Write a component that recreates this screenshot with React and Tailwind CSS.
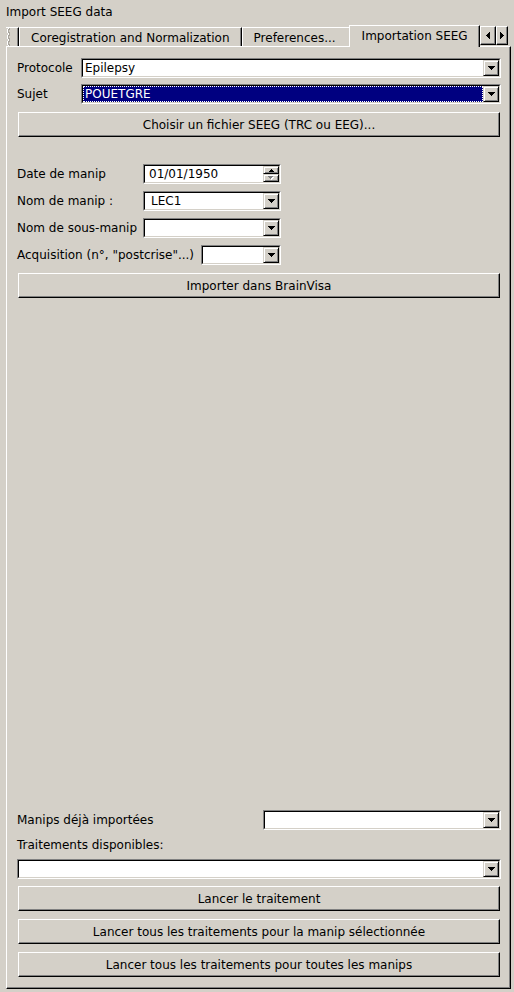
import React from "react";

const FONT = "font-['DejaVu_Sans','Liberation_Sans',sans-serif]";

function DownTri({ color = "#000000" }) {
  return (
    <svg width="7" height="4" viewBox="0 0 7 4" shapeRendering="crispEdges">
      <rect x="0" y="0" width="7" height="1" fill={color} />
      <rect x="1" y="1" width="5" height="1" fill={color} />
      <rect x="2" y="2" width="3" height="1" fill={color} />
      <rect x="3" y="3" width="1" height="1" fill={color} />
    </svg>
  );
}

function SmallUp() {
  return (
    <svg width="5" height="3" viewBox="0 0 5 3" shapeRendering="crispEdges">
      <rect x="2" y="0" width="1" height="1" fill="#000" />
      <rect x="1" y="1" width="3" height="1" fill="#000" />
      <rect x="0" y="2" width="5" height="1" fill="#000" />
    </svg>
  );
}

function SmallDownDisabled() {
  return (
    <svg width="6" height="4" viewBox="0 0 6 4" shapeRendering="crispEdges">
      <rect x="1" y="1" width="5" height="1" fill="#ffffff" />
      <rect x="2" y="2" width="3" height="1" fill="#ffffff" />
      <rect x="3" y="3" width="1" height="1" fill="#ffffff" />
      <rect x="0" y="0" width="5" height="1" fill="#808080" />
      <rect x="1" y="1" width="3" height="1" fill="#808080" />
      <rect x="2" y="2" width="1" height="1" fill="#808080" />
    </svg>
  );
}

function LeftTri() {
  return (
    <svg width="4" height="7" viewBox="0 0 4 7" shapeRendering="crispEdges">
      <rect x="0" y="3" width="1" height="1" fill="#000" />
      <rect x="1" y="2" width="1" height="3" fill="#000" />
      <rect x="2" y="1" width="1" height="5" fill="#000" />
      <rect x="3" y="0" width="1" height="7" fill="#000" />
    </svg>
  );
}

function RightTri() {
  return (
    <svg width="4" height="7" viewBox="0 0 4 7" shapeRendering="crispEdges">
      <rect x="0" y="0" width="1" height="7" fill="#000" />
      <rect x="1" y="1" width="1" height="5" fill="#000" />
      <rect x="2" y="2" width="1" height="3" fill="#000" />
      <rect x="3" y="3" width="1" height="1" fill="#000" />
    </svg>
  );
}

function RaisedSmall({ className = "", children }) {
  return (
    <div
      className={`flex items-center justify-center bg-[#d4d0c8] border border-t-[#d4d0c8] border-l-[#d4d0c8] border-r-black border-b-black shadow-[inset_1px_1px_0_#ffffff,inset_-1px_-1px_0_#808080] ${className}`}
    >
      {children}
    </div>
  );
}

function Sunken({ className = "", children }) {
  return (
    <div
      className={`flex h-[20px] border border-t-[#808080] border-l-[#808080] border-r-white border-b-white ${className}`}
    >
      <div className="flex flex-1 min-w-0 bg-white border border-t-black border-l-black border-r-[#d4d0c8] border-b-[#d4d0c8]">
        {children}
      </div>
    </div>
  );
}

function Combo({ className = "", value = "", selected = false, pad = "pl-[2px]" }) {
  return (
    <Sunken className={className}>
      {selected ? (
        <div className="flex flex-1 min-w-0 items-center bg-[#000080] border border-dotted border-white text-white">
          <span className="pl-[1px] leading-[14px]">{value}</span>
        </div>
      ) : (
        <div className="flex flex-1 min-w-0 items-center">
          <span className={`${pad} leading-[14px]`}>{value}</span>
        </div>
      )}
      <RaisedSmall className="w-[16px] h-[16px]">
        <DownTri />
      </RaisedSmall>
    </Sunken>
  );
}

function Button({ children }) {
  return (
    <div className="mx-[1px] flex h-[25px] items-center justify-center bg-[#d4d0c8] border border-t-white border-l-white border-r-black border-b-black shadow-[inset_-1px_-1px_0_#808080] leading-[14px]">
      {children}
    </div>
  );
}

function Row({ label, labelW, children, className = "" }) {
  return (
    <div className={`flex items-center h-[20px] ${className}`}>
      <div className={`${labelW} shrink-0 leading-[14px] whitespace-nowrap`}>{label}</div>
      {children}
    </div>
  );
}

export default function App() {
  return (
    <div className={`w-[514px] h-[992px] bg-[#d4d0c8] text-black text-[12px] ${FONT} overflow-hidden`}>
      <div className="h-[25px] pl-[6px] pt-[5px] leading-[14px]">Import SEEG data</div>

      {/* Tab bar */}
      <div className="flex items-end h-[21px] pl-[6px]">
        <div className="flex h-[19px] w-[13px] border-t border-t-white border-r border-r-black shadow-[inset_-1px_0_0_#808080]">
          <svg width="6" height="18" viewBox="0 0 6 18" shapeRendering="crispEdges">
            <polyline points="3,0 1,3 3,6 1,9 3,12 1,15 3,18" fill="none" stroke="#ffffff" strokeWidth="1" />
            <polyline points="4,0 2,3 4,6 2,9 4,12 2,15 4,18" fill="none" stroke="#a8a49c" strokeWidth="1" />
          </svg>
        </div>
        <div className="h-[19px] border-t border-l border-r border-t-white border-l-white border-r-black shadow-[inset_-1px_0_0_#808080] pl-[11px] pr-[11px] pt-[3px] leading-[14px] whitespace-nowrap">
          Coregistration and Normalization
        </div>
        <div className="h-[19px] border-t border-l border-t-white border-l-white pl-[11px] pr-[13px] pt-[3px] leading-[14px] whitespace-nowrap">
          Preferences...
        </div>
        <div className="relative z-10 -mb-[1px] h-[22px] bg-[#d4d0c8] border-t border-l border-r border-t-white border-l-white border-r-black shadow-[inset_-1px_0_0_#808080] pl-[12px] pr-[11px] pt-[3px] leading-[14px] whitespace-nowrap">
          Importation SEEG
        </div>
        <div className="self-start mt-[1px] flex h-[19px]">
          <div className="flex w-[16px] items-center justify-center border border-t-white border-l-white border-r-black border-b-black shadow-[inset_-1px_-1px_0_#808080]">
            <LeftTri />
          </div>
          <div className="flex w-[12px] items-center justify-center border border-t-white border-l-white border-r-black border-b-black shadow-[inset_-1px_-1px_0_#808080]">
            <RightTri />
          </div>
        </div>
      </div>

      {/* Panel */}
      <div className="ml-[6px] w-[505px] h-[943px] flex flex-col border border-t-white border-l-white border-r-black border-b-black shadow-[inset_-1px_-1px_0_#808080] pl-[10px] pr-[9px] pt-[11px] pb-[11px]">
        <Row label="Protocole" labelW="w-[64px]">
          <Combo className="flex-1" value="Epilepsy" />
        </Row>
        <Row label="Sujet" labelW="w-[64px]" className="mt-[6px]">
          <Combo className="flex-1" value="POUETGRE" selected />
        </Row>
        <div className="mt-[8px]">
          <Button>Choisir un fichier SEEG (TRC ou EEG)...</Button>
        </div>

        <Row label="Date de manip" labelW="w-[126px]" className="mt-[27px]">
          <Sunken className="w-[138px]">
            <div className="flex flex-1 items-center pl-[4px]">
              <span className="leading-[14px]">01/01/1950</span>
            </div>
            <div className="flex flex-col w-[16px]">
              <RaisedSmall className="h-[8px]">
                <SmallUp />
              </RaisedSmall>
              <RaisedSmall className="h-[8px]">
                <SmallDownDisabled />
              </RaisedSmall>
            </div>
          </Sunken>
        </Row>
        <Row label="Nom de manip :" labelW="w-[126px]" className="mt-[7px]">
          <Combo className="w-[138px]" value="LEC1" pad="pl-[6px]" />
        </Row>
        <Row label="Nom de sous-manip" labelW="w-[126px]" className="mt-[7px]">
          <Combo className="w-[138px]" />
        </Row>
        <Row label={'Acquisition (n°, "postcrise"...)'} labelW="w-[184px]" className="mt-[7px]">
          <Combo className="w-[80px]" />
        </Row>
        <div className="mt-[8px]">
          <Button>Importer dans BrainVisa</Button>
        </div>

        <div className="flex-1" />

        <div className="flex items-center h-[20px]">
          <div className="leading-[14px] whitespace-nowrap">Manips déjà importées</div>
          <Combo className="ml-auto w-[238px]" />
        </div>
        <div className="mt-[8px] h-[14px] leading-[14px]">Traitements disponibles:</div>
        <Combo className="mt-[7px]" />
        <div className="mt-[7px]">
          <Button>Lancer le traitement</Button>
        </div>
        <div className="mt-[8px]">
          <Button>Lancer tous les traitements pour la manip sélectionnée</Button>
        </div>
        <div className="mt-[8px]">
          <Button>Lancer tous les traitements pour toutes les manips</Button>
        </div>
      </div>
    </div>
  );
}
